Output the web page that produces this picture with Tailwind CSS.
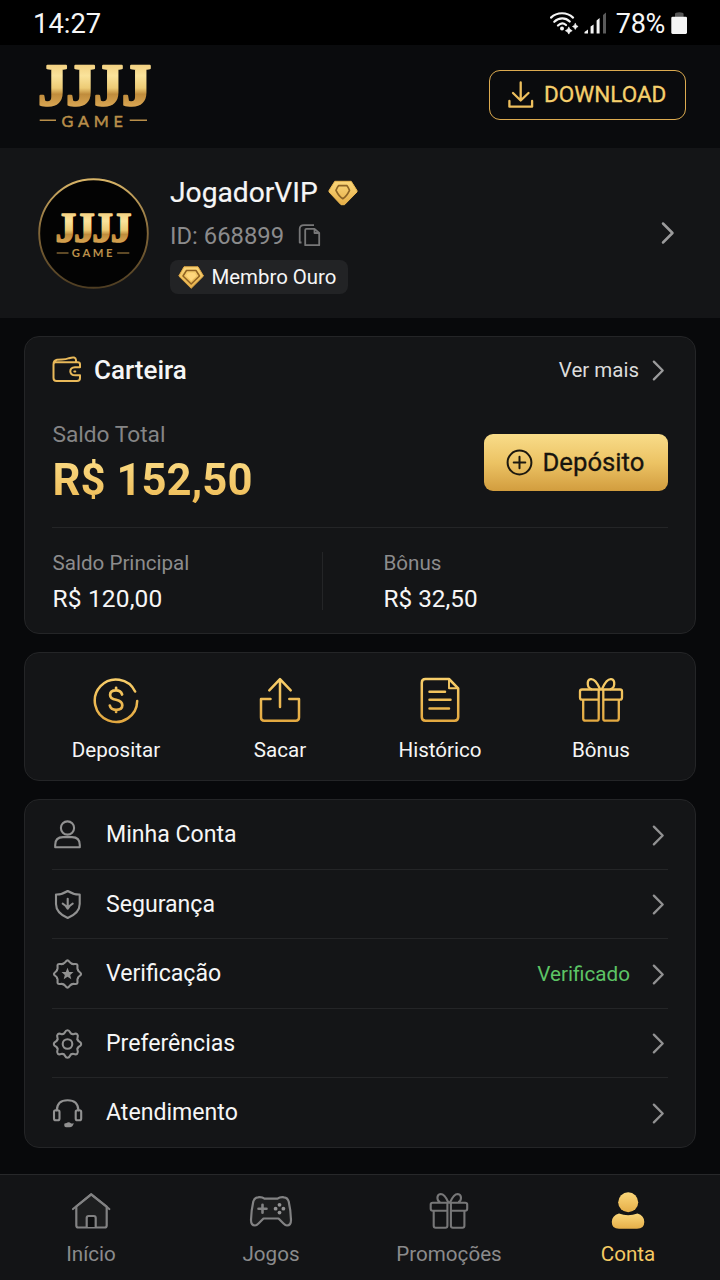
<!DOCTYPE html>
<html lang="pt-BR">
<head>
<meta charset="utf-8">
<meta name="viewport" content="width=720">
<title>JJJJ Game - Conta</title>
<script src="https://cdn.jsdelivr.net/npm/@tailwindcss/browser@4"></script>
</head>
<body class="w-[720px] h-[1280px] overflow-hidden bg-[#08090b] text-[#f6f6f6] font-['Roboto',sans-serif]">
<svg class="absolute w-0 h-0" aria-hidden="true">
  <defs>
    <linearGradient id="gold" gradientUnits="userSpaceOnUse" x1="0" y1="65" x2="0" y2="106"><stop offset="0" stop-color="#f3d283"/><stop offset=".25" stop-color="#fae39b"/><stop offset=".55" stop-color="#edcb75"/><stop offset=".7" stop-color="#c08c3c"/><stop offset="1" stop-color="#d9a653"/></linearGradient>
    <linearGradient id="gold2" gradientUnits="userSpaceOnUse" x1="0" y1="213" x2="0" y2="243"><stop offset="0" stop-color="#f3d283"/><stop offset=".25" stop-color="#fae39b"/><stop offset=".55" stop-color="#edcb75"/><stop offset=".7" stop-color="#c08c3c"/><stop offset="1" stop-color="#d9a653"/></linearGradient>
    <linearGradient id="g1" gradientUnits="userSpaceOnUse" x1="0" y1="677" x2="0" y2="722"><stop offset="0" stop-color="#f9d06c"/><stop offset="1" stop-color="#e3a840"/></linearGradient>
    <linearGradient id="g2" x1="0" y1="0" x2="0" y2="1"><stop offset="0" stop-color="#fbd77a"/><stop offset="1" stop-color="#e5ae48"/></linearGradient>
    <linearGradient id="ring" x1="0" y1="0" x2="0" y2="1"><stop offset="0" stop-color="#d9b568"/><stop offset=".5" stop-color="#806538"/><stop offset="1" stop-color="#4e3d22"/></linearGradient>
    <symbol id="chev" viewBox="0 0 14 24"><path d="M2 2.5 11.5 12 2 21.500" fill="none" stroke="currentColor" stroke-width="2.500" stroke-linecap="round" stroke-linejoin="round"/></symbol>
    <path id="tooth" d="M-4.200-10.150C-2.100-10.200-3-13.700 0-13.700C3-13.700 2.100-10.200 4.200-10.150"/>
    <path id="point" d="M-4.300-10.400C-2.400-10.300-1.700-13.600 0-13.600C1.700-13.600 2.400-10.300 4.300-10.400"/>
  </defs>
</svg>

<div class="flex flex-col h-[1280px]">
  <!-- Status bar -->
  <div class="h-[45px] shrink-0 bg-black flex items-center justify-between pl-[33px] pr-[32px]">
    <span class="text-[27.400px] leading-none pt-[5px]">14:27</span>
    <div class="flex items-center">
      <svg class="w-[60px] h-[28px]" viewBox="550 9 60 28" fill="none" stroke="#f4f4f4" stroke-width="2.200" stroke-linecap="round">
        <path d="M551 17.600C557 11.800 567 11.800 573 17.600M554.300 21.800C559 17.300 565.500 17.300 569.700 21.500M558 25.500C560.500 23 563.700 23 566 25"/>
        <circle cx="562" cy="28.400" r="2" fill="#f4f4f4" stroke="none"/>
        <path fill="#f4f4f4" stroke="#f4f4f4" stroke-width=".7" d="M568.800 27.300q.7 2.700 3.400 3.400q-2.700.7-3.400 3.400q-.7-2.700-3.400-3.400q2.700-.7 3.400-3.400zM575.300 23.600q.6 2.300 2.800 2.900q-2.200.6-2.800 2.900q-.6-2.300-2.800-2.900q2.200-.6 2.800-2.900z"/>
        <path fill="#f4f4f4" stroke="none" d="M584.500 33.500v-1.500l3.500-2.500v4zM590.600 26.500l3-2v9h-3zM596.600 20.500l3-2.500v15.500h-3z"/>
        <path fill="#5a5a5a" stroke="none" d="M603 15l3-2.500v21h-3z"/>
      </svg>
      <span class="text-[27px] leading-none pt-[3px] ml-[6px] tracking-[-0.300px]">78%</span>
      <svg class="w-[18px] h-[24px] ml-[5px]" viewBox="670 11 18 24"><path d="M675 17v-3q0-1.700 4.300-1.700t4.300 1.700v3z" fill="#555"/><rect x="671.300" y="16.700" width="15.700" height="17.200" rx="1.300" fill="#f5f5f5"/></svg>
    </div>
  </div>

  <!-- Brand header -->
  <header class="h-[103px] shrink-0 bg-[#0a0b0d] flex items-center justify-between pl-[36px] pr-[34px]">
    <svg class="w-[120px] h-[72px] overflow-visible" viewBox="36 60.500 120 72" role="img" aria-label="JJJJ Game">
      <text x="38 65.900 93.800 121.700" y="104" font-family="Liberation Serif, serif" font-weight="700" font-size="59" fill="url(#gold)" stroke="url(#gold)" stroke-width="2.300" stroke-linejoin="round">JJJJ</text>
      <text x="61.500" y="126" font-family="Lato, sans-serif" font-weight="400" font-size="16.200" letter-spacing="4.800" fill="#b98f4a" stroke="#b98f4a" stroke-width=".5">GAME</text>
      <path d="M39.700 119.700H56M129.700 119.700H147" stroke="#b98f4a" stroke-width="1.500"/>
    </svg>
    <button class="w-[197px] h-[50px] -mt-[4px] rounded-[11px] border-[1.500px] border-[#dcab50] flex items-center pl-[18px] text-[#f5cf6c]">
      <svg class="w-[26px] h-[28px] shrink-0" viewBox="507.500 80.500 26 28" fill="none" stroke="#edbf5d" stroke-width="2.300" stroke-linejoin="round" stroke-linecap="round"><path d="M520.200 82V99.500M512.500 92.500 520.200 100 528 92.500M508.900 100.500V106.200H531.600V100.500"/></svg>
      <span class="ml-[10px] text-[22.500px] leading-none [-webkit-text-stroke:0.300px_#f5cf6c]">DOWNLOAD</span>
    </button>
  </header>

  <!-- Profile -->
  <section class="h-[170px] shrink-0 bg-[#141517] flex items-center pl-[37px] pr-[45px]">
    <svg class="w-[113px] h-[113px] shrink-0" viewBox="37 176.500 113 113" role="img" aria-label="Avatar">
      <circle cx="93.500" cy="233" r="54.300" fill="#030303" stroke="url(#ring)" stroke-width="1.900"/>
      <text x="55.500 73.900 92.300 110.700" y="241" font-family="Liberation Serif, serif" font-weight="700" font-size="41.500" fill="url(#gold2)" stroke="url(#gold2)" stroke-width="1.600" stroke-linejoin="round">JJJJ</text>
      <text x="71.700" y="256.500" font-family="Lato, sans-serif" font-weight="700" font-size="11.300" letter-spacing="2.600" fill="#b98f4a">GAME</text>
      <path d="M56.700 252.500H68.500M117.200 252.500H129.300" stroke="#b98f4a" stroke-width="1.200"/>
    </svg>
    <div class="ml-[20px] flex flex-col items-start">
      <div class="h-[38px] flex items-center mt-[2px]">
        <span class="text-[28.200px] leading-none [-webkit-text-stroke:0.200px_#f6f6f6]">JogadorVIP</span>
        <svg class="w-[31px] h-[27px] ml-[10px]" viewBox="328 180 31 27"><path d="M334.800 181.300H351.200L357 190.500V192L344.500 204.700H341L329 192V190.500Z" fill="url(#g2)" stroke="#e9b752" stroke-width="1" stroke-linejoin="round"/><path d="M338.500 185.700H347Q348.300 187.300 349.500 190.300Q346.500 196.500 342.800 198.700Q339 196.500 336 190.300Q337.200 187.300 338.500 185.700Z" fill="none" stroke="#8c6426" stroke-width="1.700" stroke-linejoin="round"/></svg>
      </div>
      <div class="h-[48px] flex items-center text-[#8b8b8c]">
        <span class="text-[23.800px] leading-none pt-[1px]">ID: 668899</span>
        <svg class="w-[23px] h-[24px] ml-[14px] -mt-[2px]" viewBox="298.500 223 23 24" fill="none" stroke="#777778" stroke-width="1.800" stroke-linejoin="round"><path d="M314.500 225.200H304.500Q300.200 225.200 300.200 229V242.500H302M307 228.800H315L319.700 233V245.200H305.700V230Q305.700 228.800 307 228.800ZM315 228.800V233H319.700"/></svg>
      </div>
      <div class="h-[34px] w-[178px] rounded-[8px] bg-[#222325] flex items-center pl-[8px]">
        <svg class="w-[26px] h-[24px]" viewBox="177.500 265.500 26 24"><path d="M183.500 267.300H197.500L203 276.500 190.700 288.800 178.300 276.500Z" fill="url(#g2)" stroke="#e0a845" stroke-width="1" stroke-linejoin="round"/><path d="M186 271H195.500L199 276.500 190.700 284.500 182.500 276.500Z" fill="none" stroke="#8f6122" stroke-width="1.500" stroke-linejoin="round"/><path d="M187.500 273.500H194L196 276.300 190.700 281.500 185.500 276.300Z" fill="#ffd67c"/></svg>
        <span class="ml-[7.500px] text-[20.400px] leading-none pt-[1px]">Membro Ouro</span>
      </div>
    </div>
    <svg class="w-[14px] h-[24px] ml-auto text-[#9b9b9c]"><use href="#chev"/></svg>
  </section>

  <main class="flex-1 px-[24px] pt-[18px] flex flex-col">
    <!-- Wallet -->
    <section class="h-[298px] rounded-[15px] border border-[#242527] bg-[#141517] px-[27px]">
      <div class="h-[66px] flex items-center">
        <svg class="w-[30px] h-[28px] -mt-[2px]" viewBox="52 355 30 28" fill="none" stroke="#e9b95a" stroke-width="2" stroke-linejoin="round" stroke-linecap="round"><path d="M80 367.200V364.500Q80 362.300 77.800 362.300H55.700Q53.500 362.300 53.500 364.500V378Q53.500 381 56.500 381H77Q80 381 80 378V375.300M53.500 364.500Q53.500 360.500 57 359.800L62 359.500Q66 359.500 69 358.200Q75.700 356 76 360V362M80 367.200H75Q70.300 367.500 70.300 371.200Q70.300 375.300 75.500 375.300H80M74.300 371.400H75.300"/></svg>
        <h2 class="ml-[12px] text-[26px] leading-none font-medium">Carteira</h2>
        <span class="ml-auto text-[20.500px] leading-none text-[#dcdcdc]">Ver mais</span>
        <svg class="w-[13px] h-[23px] ml-[13px] mr-[3px] text-[#9b9b9c]"><use href="#chev"/></svg>
      </div>
      <div class="h-[124px] flex justify-between">
        <div class="pt-[20px] pl-[0.500px]">
          <div class="h-[24px] flex items-center text-[22.700px] leading-none text-[#858586]">Saldo Total</div>
          <div class="mt-[12px] h-[44px] flex items-center text-[43.700px] leading-none font-bold bg-gradient-to-b from-[#fada83] to-[#eebb55] bg-clip-text text-transparent">R$ 152,50</div>
        </div>
        <button class="mt-[31px] w-[184px] h-[57px] rounded-[9px] bg-gradient-to-b from-[#f8dc89] via-[#ecc364] to-[#d29d3e] flex items-center pl-[22px] text-[#17140e]">
          <svg class="w-[27px] h-[27px]" viewBox="0 0 27 27" fill="none" stroke="#1c180f" stroke-width="2" stroke-linecap="round"><circle cx="13.500" cy="13.500" r="11.900"/><path d="M13.500 7.700V19.300M7.700 13.500H19.300"/></svg>
          <span class="ml-[9.500px] text-[25.700px] leading-none [-webkit-text-stroke:0.300px_#17140e]">Depósito</span>
        </button>
      </div>
      <div class="border-t border-[#242527] flex pt-[24px]">
        <div class="w-[270px] pl-[0.500px] flex flex-col gap-[12px]">
          <span class="h-[22px] flex items-center text-[20.600px] leading-none text-[#8c8c8d]">Saldo Principal</span>
          <span class="h-[26px] flex items-center text-[24.500px] tracking-[0.150px] leading-none">R$ 120,00</span>
        </div>
        <div class="w-px h-[58px] bg-[#242527]"></div>
        <div class="ml-[60.500px] flex flex-col gap-[12px]">
          <span class="h-[22px] flex items-center text-[20.600px] leading-none text-[#8c8c8d]">Bônus</span>
          <span class="h-[26px] flex items-center text-[24.300px] leading-none">R$ 32,50</span>
        </div>
      </div>
    </section>

    <!-- Quick actions -->
    <section class="mt-[18px] h-[129px] rounded-[15px] border border-[#242527] bg-[#141517] pl-[10px] grid grid-cols-[162px_166px_154px_168px] text-[20.600px] leading-none">
      <a class="flex flex-col items-center pt-[23px] gap-[16px]">
        <svg class="w-[48px] h-[48px]" viewBox="92.200 676 48 48" fill="none" stroke="url(#g1)" stroke-width="2.500" stroke-linecap="round"><path d="M137.400 701A21.200 21.200 0 1 1 135.300 691.500"/><path stroke-width="2.700" d="M122.300 694.500Q121 690.400 116.300 690.400Q110.300 690.400 110.300 694.900Q110.300 698.500 116.300 699.800Q122.500 701.300 122.500 705.200Q122.500 709.800 116.300 709.800Q111 709.800 110 705.500M116.300 687.800V690M116.300 710V712"/></svg>
        <span>Depositar</span>
      </a>
      <a class="flex flex-col items-center pt-[23px] gap-[16px]">
        <svg class="w-[48px] h-[48px]" viewBox="256 676 48 48" fill="none" stroke="url(#g1)" stroke-width="2.500" stroke-linecap="round" stroke-linejoin="round"><path d="M280 707V679.200M269.300 690.300 280 679.200 290.700 690.300M270.500 699H261V717.500Q261 720.700 264.200 720.700H295.800Q299 720.700 299 717.500V699H289.300"/></svg>
        <span>Sacar</span>
      </a>
      <a class="flex flex-col items-center pt-[23px] gap-[16px]">
        <svg class="w-[48px] h-[48px]" viewBox="416.500 676 48 48" fill="none" stroke="url(#g1)" stroke-width="2.500" stroke-linecap="round" stroke-linejoin="round"><path d="M449.500 679H426Q422.300 679 422.300 682.700V717Q422.300 720.700 426 720.700H455Q458.700 720.700 458.700 717V688.300Z"/><path d="M449.500 679.500V688.300H458" stroke-width="1.900"/><path d="M430 691.700H445.500M430 699.800H451M430 708.500H449.500"/></svg>
        <span>Histórico</span>
      </a>
      <a class="flex flex-col items-center pt-[23px] gap-[16px]">
        <svg class="w-[48px] h-[48px]" viewBox="577 676 48 48" fill="none" stroke="url(#g1)" stroke-width="2.300" stroke-linejoin="round"><path d="M598.700 689.500H582Q580 689.500 580 691.500V697.500Q580 699.700 582 699.700H598.700M603.300 689.500H620Q622 689.500 622 691.500V697.500Q622 699.700 620 699.700H603.300M583.200 699.700V718.500Q583.200 720.700 585.400 720.700H596.700Q598.700 720.700 598.700 718.700V689.500H603.300V718.700Q603.300 720.700 605.300 720.700H616.600Q618.800 720.700 618.800 718.500V699.700"/><path d="M600 689Q595.500 679 591 679.200Q587.300 679.500 587.800 684.500Q588.200 688.500 592 689.300M602 689Q606.500 679 611 679.200Q614.700 679.500 614.200 684.500Q613.800 688.500 610 689.300"/></svg>
        <span>Bônus</span>
      </a>
    </section>

    <!-- Account menu -->
    <nav class="mt-[18px] h-[349px] rounded-[15px] border border-[#242527] bg-[#141517] px-[27px] grid grid-rows-[70px_69px_70px_69px_69px] text-[23.100px] leading-none">
      <a class="flex items-center pt-[1px] border-b border-[#242527]">
        <svg class="w-[32px] h-[32px] mr-[22px]" viewBox="52 819.500 32 32" fill="none" stroke="#919191" stroke-width="2.100" stroke-linejoin="round"><circle cx="67.500" cy="828.500" r="6.600"/><path d="M55.200 847.700V845.500Q55.200 837.600 63 837.600H72Q79.800 837.600 79.800 845.500V847.700Z"/></svg>
        <span>Minha Conta</span>
        <svg class="w-[13px] h-[23px] ml-auto mr-[3px] text-[#919192]"><use href="#chev"/></svg>
      </a>
      <a class="flex items-center pt-[1px] border-b border-[#242527]">
        <svg class="w-[32px] h-[32px] mr-[22px]" viewBox="52 889 32 32" fill="none" stroke="#919191" stroke-width="2.100" stroke-linejoin="round" stroke-linecap="round"><path d="M67.700 891Q73.500 894.700 79.700 894.500V904Q79.700 913 67.700 918Q56 913 56 904V894.500Q62 894.700 67.700 891Z"/><path d="M67.700 898.800V908.700M62.700 903.700Q66 905.500 67.700 908.700Q69.400 905.500 72.700 903.700"/></svg>
        <span>Segurança</span>
        <svg class="w-[13px] h-[23px] ml-auto mr-[3px] text-[#919192]"><use href="#chev"/></svg>
      </a>
      <a class="flex items-center pt-[1px] border-b border-[#242527]">
        <svg class="w-[32px] h-[32px] mr-[22px]" viewBox="-15.500 -16 32 32" fill="none" stroke="#919191" stroke-width="2.100" stroke-linecap="round"><use href="#point"/><use href="#point" transform="rotate(45)"/><use href="#point" transform="rotate(90)"/><use href="#point" transform="rotate(135)"/><use href="#point" transform="rotate(180)"/><use href="#point" transform="rotate(225)"/><use href="#point" transform="rotate(270)"/><use href="#point" transform="rotate(315)"/><path fill="#919191" stroke="none" d="M0-6.300 1.700-2.100 6-1.900 2.700.9 3.800 5.200 0 2.800-3.800 5.200-2.700.9-6-1.900-1.700-2.100Z"/></svg>
        <span>Verificação</span>
        <span class="ml-auto text-[20.700px] text-[#5cc465]">Verificado</span>
        <svg class="w-[13px] h-[23px] ml-[22px] mr-[3px] text-[#919192]"><use href="#chev"/></svg>
      </a>
      <a class="flex items-center pt-[1px] border-b border-[#242527]">
        <svg class="w-[32px] h-[32px] mr-[22px]" viewBox="-15.500 -16 32 32" fill="none" stroke="#919191" stroke-width="2.100" stroke-linecap="round"><use href="#tooth"/><use href="#tooth" transform="rotate(45)"/><use href="#tooth" transform="rotate(90)"/><use href="#tooth" transform="rotate(135)"/><use href="#tooth" transform="rotate(180)"/><use href="#tooth" transform="rotate(225)"/><use href="#tooth" transform="rotate(270)"/><use href="#tooth" transform="rotate(315)"/><circle r="4.800"/></svg>
        <span>Preferências</span>
        <svg class="w-[13px] h-[23px] ml-auto mr-[3px] text-[#919192]"><use href="#chev"/></svg>
      </a>
      <a class="flex items-center pt-[1px]">
        <svg class="w-[32px] h-[32px] mr-[22px]" viewBox="52 1097 32 32" fill="none" stroke="#919191" stroke-width="2.100" stroke-linecap="round"><path d="M56.800 1110.500Q57 1100.300 67.600 1100.300T78.400 1110.500"/><rect x="54" y="1110.300" width="5.500" height="10" rx="1.800"/><rect x="75.700" y="1110.300" width="5.500" height="10" rx="1.800"/><path fill="#919191" stroke="none" d="M64.300 1124Q64.300 1123 66 1123.200Q69 1121.500 70.500 1123Q72 1124 73.800 1123Q73 1127.200 69.500 1127.200H66Q64.300 1127.200 64.300 1125.500Z"/></svg>
        <span>Atendimento</span>
        <svg class="w-[13px] h-[23px] ml-auto mr-[3px] text-[#919192]"><use href="#chev"/></svg>
      </a>
    </nav>
  </main>

  <!-- Bottom tabs -->
  <nav class="h-[106px] shrink-0 border-t border-[#27282a] bg-[#131416] grid grid-cols-[182px_178px_178px_180px] text-[20.600px] leading-none text-[#8b8b8c]">
    <a class="flex flex-col items-center pt-[15px] gap-[12px]">
      <svg class="w-[44px] h-[42px]" viewBox="69 1190 44 42" fill="none" stroke="#828283" stroke-width="2.200" stroke-linejoin="round" stroke-linecap="round"><path fill="#1d1e1f" d="M76.300 1206.500V1225.500Q76.300 1227.500 78.300 1227.500H104.700Q106.700 1227.500 106.700 1225.500V1206.500L91.200 1194.300Z"/><path d="M73 1209 91.200 1194.300 109.300 1209"/><path fill="#0d0e0f" d="M86.700 1227V1218Q86.700 1216 88.700 1216H93.700Q95.700 1216 95.700 1218V1227"/></svg>
      <span>Início</span>
    </a>
    <a class="flex flex-col items-center pt-[15px] gap-[12px]">
      <svg class="w-[44px] h-[42px]" viewBox="249 1190 44 42" fill="none" stroke="#828283" stroke-width="2.200" stroke-linejoin="round" stroke-linecap="round"><path fill="#1d1e1f" d="M264.500 1198.700H277.500Q280 1196.800 284 1197.300Q287.500 1197.500 288.700 1201.500Q290.700 1210 291 1220Q291 1225.500 287 1225.500Q285.500 1225.500 283.500 1223.500L278.500 1218.500H263.500L258.500 1223.500Q256.500 1225.500 255 1225.500Q251 1225.500 251 1220Q251.300 1210 253.300 1201.500Q254.500 1197.500 258 1197.300Q262 1196.800 264.500 1198.700Z"/><path stroke-width="2.600" d="M262.500 1204.700V1212.700M258.500 1208.700H266.500"/><g fill="#929293" stroke="none"><circle cx="279.500" cy="1204.800" r="1.900"/><circle cx="279.500" cy="1212.600" r="1.900"/><circle cx="275.600" cy="1208.700" r="1.900"/><circle cx="283.400" cy="1208.700" r="1.900"/></g></svg>
      <span>Jogos</span>
    </a>
    <a class="flex flex-col items-center pt-[15px] gap-[12px]">
      <svg class="w-[44px] h-[42px]" viewBox="427.300 1190 44 42" fill="none" stroke="#777778" stroke-width="2.100" stroke-linejoin="round"><path d="M447.700 1202.700H433Q431 1202.700 431 1204.500V1208.700Q431 1210.700 433 1210.700H447.700M451.200 1202.700H465.500Q467.500 1202.700 467.500 1204.500V1208.700Q467.500 1210.700 465.500 1210.700H451.200M434 1210.700V1225.700Q434 1227.700 436 1227.700H445.700Q447.700 1227.700 447.700 1225.700V1202.700H451.200V1225.700Q451.200 1227.700 453.200 1227.700H462.700Q464.700 1227.700 464.700 1225.700V1210.700"/><path d="M448.700 1202.500Q445 1194 441 1194Q437.700 1194.300 437.700 1198Q438 1201.500 440.500 1202.300M450.300 1202.500Q454 1194 458 1194Q461.300 1194.300 461.300 1198Q461 1201.500 458.500 1202.300"/></svg>
      <span>Promoções</span>
    </a>
    <a class="flex flex-col items-center pt-[15px] gap-[12px] text-[#f5ca63]">
      <svg class="w-[44px] h-[42px]" viewBox="606.500 1190 44 42"><circle cx="628.700" cy="1202.300" r="10" fill="url(#g2)"/><path fill="url(#g2)" d="M619.500 1213.500Q628.500 1216.800 638 1213.500Q644.800 1215.500 644.800 1222Q644.800 1228.800 637.500 1228.800H619.500Q612.300 1228.800 612.300 1222Q612.300 1215.500 619.500 1213.500Z"/></svg>
      <span>Conta</span>
    </a>
  </nav>
</div>
</body>
</html>
